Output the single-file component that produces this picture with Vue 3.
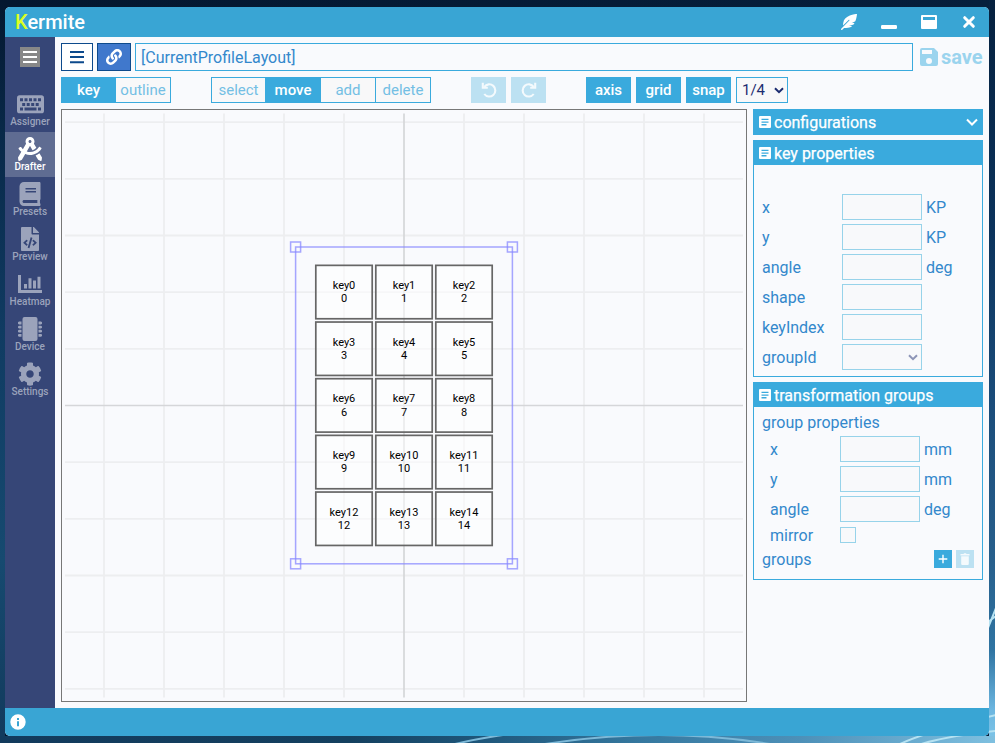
<script setup>
const icons = {
  drafter: 'M457.01 344.42c-25.05 20.33-52.63 37.18-82.54 49.05l54.38 94.19 53.95 23.04c9.81 4.19 20.89-2.21 22.17-12.8l7.02-58.25-54.98-95.23zm42.49-94.56c4.86-7.67 1.89-17.99-6.05-22.39l-28.07-15.57c-7.48-4.15-16.61-1.46-21.26 5.72C403.01 281.15 332.25 320 256 320c-23.93 0-47.23-4.25-69.41-11.53l67.36-116.68c.7.02 1.34.21 2.04.21s1.35-.19 2.04-.21l51.09 88.5c31.23-8.96 59.56-25.75 82.61-48.92l-51.79-89.71C347.39 128.03 352 112.63 352 96c0-53.02-42.98-96-96-96s-96 42.98-96 96c0 16.63 4.61 32.03 12.05 45.66l-68.3 118.31c-12.55-11.61-23.96-24.59-33.68-39-4.79-7.1-13.97-9.62-21.38-5.33l-27.75 16.07c-7.85 4.54-10.63 14.9-5.64 22.47 15.57 23.64 34.69 44.21 55.98 62.02L0 439.66l7.02 58.25c1.28 10.59 12.36 16.99 22.17 12.8l53.95-23.04 70.8-122.63C186.13 377.28 220.62 384 256 384c99.05 0 190-51.93 243.5-134.14zM256 64c17.67 0 32 14.33 32 32s-14.33 32-32 32-32-14.33-32-32 14.33-32 32-32z',
  book: 'M448 360V24c0-13.3-10.7-24-24-24H96C43 0 0 43 0 96v320c0 53 43 96 96 96h328c13.3 0 24-10.7 24-24v-16c0-7.5-3.5-14.3-8.9-18.7-4.2-15.4-4.2-59.3 0-74.7 5.4-4.3 8.9-11.1 8.9-18.6zM128 134c0-3.3 2.7-6 6-6h212c3.3 0 6 2.7 6 6v20c0 3.3-2.7 6-6 6H134c-3.3 0-6-2.7-6-6v-20zm0 64c0-3.3 2.7-6 6-6h212c3.3 0 6 2.7 6 6v20c0 3.3-2.7 6-6 6H134c-3.3 0-6-2.7-6-6v-20zm253.4 250H96c-17.7 0-32-14.3-32-32 0-17.6 14.4-32 32-32h285.4c-1.9 17.1-1.9 46.9 0 64z',
  code: 'M384 121.941V128H256V0h6.059c6.365 0 12.47 2.529 16.971 7.029l97.941 97.941A24.005 24.005 0 0 1 384 121.941zM248 160c-13.2 0-24-10.8-24-24V0H24C10.745 0 0 10.745 0 24v464c0 13.255 10.745 24 24 24h336c13.255 0 24-10.745 24-24V160H248zM123.206 400.505a5.4 5.4 0 0 1-7.633.246l-64.866-60.812a5.4 5.4 0 0 1 0-7.879l64.866-60.812a5.4 5.4 0 0 1 7.633.246l19.579 20.885a5.4 5.4 0 0 1-.372 7.747L101.65 336l40.763 35.874a5.4 5.4 0 0 1 .372 7.747l-19.579 20.884zm51.295 50.479l-27.453-7.97a5.402 5.402 0 0 1-3.681-6.692l61.44-211.626a5.402 5.402 0 0 1 6.692-3.681l27.452 7.97a5.4 5.4 0 0 1 3.68 6.692l-61.44 211.626a5.397 5.397 0 0 1-6.69 3.681zm160.792-111.045l-64.866 60.812a5.4 5.4 0 0 1-7.633-.246l-19.58-20.885a5.4 5.4 0 0 1 .372-7.747L284.35 336l-40.763-35.874a5.4 5.4 0 0 1-.372-7.747l19.58-20.885a5.4 5.4 0 0 1 7.633-.246l64.866 60.812a5.4 5.4 0 0 1-.001 7.879z',
  cog: 'M487.4 315.7l-42.6-24.6c4.3-23.2 4.3-47 0-70.2l42.6-24.6c4.9-2.8 7.1-8.6 5.5-14-11.1-35.6-30-67.8-54.7-94.6-3.8-4.1-10-5.1-14.8-2.3L380.8 110c-17.9-15.4-38.5-27.3-60.8-35.1V25.8c0-5.6-3.9-10.5-9.4-11.7-36.7-8.2-74.3-7.8-109.2 0-5.5 1.2-9.4 6.1-9.4 11.7V75c-22.2 7.9-42.8 19.8-60.8 35.1L88.7 85.5c-4.9-2.8-11-1.9-14.8 2.3-24.7 26.7-43.6 58.9-54.7 94.6-1.7 5.4.6 11.2 5.5 14L67.3 221c-4.3 23.2-4.3 47 0 70.2l-42.6 24.6c-4.9 2.8-7.1 8.6-5.5 14 11.1 35.6 30 67.8 54.7 94.6 3.8 4.1 10 5.1 14.8 2.3l42.6-24.6c17.9 15.4 38.5 27.3 60.8 35.1v49.2c0 5.6 3.9 10.5 9.4 11.7 36.7 8.2 74.3 7.8 109.2 0 5.5-1.2 9.4-6.1 9.4-11.7v-49.2c22.2-7.9 42.8-19.8 60.8-35.1l42.6 24.6c4.9 2.8 11 1.9 14.8-2.3 24.7-26.7 43.6-58.9 54.7-94.6 1.5-5.5-.7-11.3-5.6-14.1zM256 336c-44.1 0-80-35.9-80-80s35.9-80 80-80 80 35.9 80 80-35.9 80-80 80z',
  keyboard: 'M2.6 3.3h21.8a2.6 2.6 0 0 1 2.6 2.6v12.8a2.6 2.6 0 0 1-2.6 2.6H2.6A2.6 2.6 0 0 1 0 18.700V5.900a2.600 2.600 0 0 1 2.600-2.600zM3 6.200v3h3v-3zM7.500 6.200v3h3v-3zM12 6.200v3h3v-3zM16.500 6.200v3h3v-3zM21 6.200v3h3v-3zM5.200 10.900v3h3v-3zM9.700 10.900v3h3v-3zM14.200 10.900v3h3v-3zM18.700 10.900v3h3v-3zM3 15.600v2.800h3v-2.800zM7.500 15.600v2.800h12v-2.800zM21 15.600v2.800h3v-2.800z',
  heatmap: 'M0 3h3v15h21v3H0zM6 12h3v4.500H6zM10.500 6.300h3v10.200h-3zM15 8.500h3v8h-3zM19.500 4.800h3v11.700h-3z',
  device: 'M6.500 0h11a2 2 0 0 1 2 2v20a2 2 0 0 1-2 2h-11a2 2 0 0 1-2-2V2a2 2 0 0 1 2-2zM1 4.600h2.500v2.800H1l-1-.7v-1.400zM1 8.700h2.500v2.800H1l-1-.7V9.400zM1 12.800h2.500v2.800H1l-1-.7v-1.400zM1 16.900h2.500v2.800H1l-1-.7v-1.400zM23 4.600h-2.500v2.800H23l1-.7v-1.400zM23 8.700h-2.500v2.800H23l1-.7V9.400zM23 12.800h-2.500v2.800H23l1-.7v-1.400zM23 16.900h-2.500v2.800H23l1-.7v-1.400z'
}

const navItems = [
  { label: 'Assigner', path: icons.keyboard, box: '0 0 27 24', width: 27 },
  { label: 'Drafter', path: icons.drafter, box: '0 0 512 512', width: 24, active: true },
  { label: 'Presets', path: icons.book, box: '0 0 448 512', width: 24 },
  { label: 'Preview', path: icons.code, box: '0 0 384 512', width: 24 },
  { label: 'Heatmap', path: icons.heatmap, box: '0 0 24 24', width: 24 },
  { label: 'Device', path: icons.device, box: '0 0 24 24', width: 24 },
  { label: 'Settings', path: icons.cog, box: '0 0 512 512', width: 24 }
]

const editModes = ['select', 'move', 'add', 'delete']
const toggles = ['axis', 'grid', 'snap']

const keyFields = [
  { label: 'x', unit: 'KP' },
  { label: 'y', unit: 'KP' },
  { label: 'angle', unit: 'deg' },
  { label: 'shape', unit: '' },
  { label: 'keyIndex', unit: '' }
]
const groupFields = [
  { label: 'x', unit: 'mm' },
  { label: 'y', unit: 'mm' },
  { label: 'angle', unit: 'deg' }
]

const centerX = 342
const centerY = 295.5
const pitchX = 60
const pitchY = 56.67

const gridX = [-5, -4, -3, -2, -1, 1, 2, 3, 4, 5].map((i) => centerX + i * pitchX)
const gridY = [-5, -4, -3, -2, -1, 1, 2, 3, 4, 5].map((i) => centerY + i * pitchY)

const keys = Array.from({ length: 15 }, (_, i) => ({
  index: i,
  x: centerX + ((i % 3) - 1) * pitchX,
  y: centerY + (Math.floor(i / 3) - 2) * pitchY - 0.1
}))

const handles = [
  [233.6, 137],
  [450.4, 137],
  [233.6, 453.8],
  [450.4, 453.8]
]
</script>

<template>
  <div class="desktop">
    <svg class="streaks" viewBox="0 0 995 743">
      <path d="M455 744Q480 738 510 734M545 744Q660 726 770 744" />
      <path class="bright" d="M900 744Q925 732 996 715M915 746Q945 736 996 731M988 628L996 608M988 622L996 616" />
    </svg>
    <div class="window">
      <header class="titlebar">
        <h1 class="title"><span class="initial">K</span>ermite</h1>
        <div class="window-controls">
          <svg class="feather" viewBox="0 0 512 512"><path d="M512 0C460.22 3.56 96.44 38.2 71.01 287.61c-3.09 26.66-4.84 53.44-5.99 80.24l178.87-178.69c6.25-6.25 16.4-6.25 22.65 0s6.25 16.38 0 22.63L7.04 471.03c-9.38 9.37-9.38 24.57 0 33.94 9.38 9.37 24.6 9.37 33.98 0l57.13-57.07c42.09-.14 84.15-2.53 125.96-7.36 53.48-5.44 97.02-26.47 132.58-56.54H255.74l146.79-48.88c11.25-14.89 21.37-30.71 30.45-47.12h-81.14l106.54-53.21C500.29 132.86 510.19 26.26 512 0z" /></svg>
          <svg viewBox="0 0 16 16"><rect y="11" width="16" height="4" rx="1.3" /></svg>
          <svg viewBox="0 0 16 16"><path fill-rule="evenodd" d="M1 1h14a1 1 0 0 1 1 1v12a1 1 0 0 1-1 1H1a1 1 0 0 1-1-1V2a1 1 0 0 1 1-1zM2 3v3h12V3z" /></svg>
          <svg viewBox="0 0 16 16"><path class="cross" d="M3.700 3.700l8.600 8.600M12.300 3.700l-8.600 8.600" /></svg>
        </div>
      </header>

      <div class="body">
        <nav class="sidebar">
          <div class="menu-slot">
            <svg class="menu-box" viewBox="0 0 20 20"><path d="M3 5h14M3 10h14M3 15h14" /></svg>
          </div>
          <div v-for="item in navItems" :key="item.label" class="nav-item" :class="{ active: item.active }">
            <svg :viewBox="item.box" :width="item.width" height="24"><path fill-rule="evenodd" :d="item.path" /></svg>
            <span>{{ item.label }}</span>
          </div>
        </nav>

        <main class="main">
          <div class="file-row">
            <button class="list-button">
              <svg width="14" height="14" viewBox="0 0 14 14"><path d="M0 2h14M0 7.100h14M0 12.200h14" /></svg>
            </button>
            <button class="link-button">
              <svg width="16" height="16" viewBox="0 0 512 512"><path d="M326.612 185.391c59.747 59.809 58.927 155.698.36 214.59-.11.12-.24.25-.36.37l-67.2 67.2c-59.27 59.27-155.699 59.262-214.96 0-59.27-59.26-59.27-155.7 0-214.96l37.106-37.106c9.84-9.84 26.786-3.3 27.294 10.606.648 17.722 3.826 35.527 9.69 52.721 1.986 5.822.567 12.262-3.783 16.612l-13.087 13.087c-28.026 28.026-28.905 73.66-1.155 101.96 28.024 28.579 74.086 28.749 102.325.51l67.2-67.19c28.191-28.191 28.073-73.757 0-101.83-3.701-3.694-7.429-6.564-10.341-8.569a16.037 16.037 0 0 1-6.947-12.606c-.396-10.567 3.348-21.456 11.698-29.806l21.054-21.055c5.521-5.521 14.182-6.199 20.584-1.731a152.482 152.482 0 0 1 20.522 17.197zM467.547 44.449c-59.261-59.262-155.69-59.27-214.96 0l-67.2 67.2c-.12.12-.25.25-.36.37-58.566 58.892-59.387 154.781.36 214.59a152.454 152.454 0 0 0 20.521 17.196c6.402 4.468 15.064 3.789 20.584-1.731l21.054-21.055c8.35-8.35 12.094-19.239 11.698-29.806a16.037 16.037 0 0 0-6.947-12.606c-2.912-2.005-6.64-4.875-10.341-8.569-28.073-28.073-28.191-73.639 0-101.83l67.2-67.19c28.239-28.239 74.3-28.069 102.325.51 27.75 28.3 26.872 73.934-1.155 101.96l-13.087 13.087c-4.35 4.35-5.769 10.79-3.783 16.612 5.864 17.194 9.042 34.999 9.69 52.721.509 13.906 17.454 20.446 27.294 10.606l37.106-37.106c59.271-59.259 59.271-155.699.001-214.959z" /></svg>
            </button>
            <div class="file-name">[CurrentProfileLayout]</div>
            <div class="save">
              <svg width="18" height="18" viewBox="0 0 18 18"><path fill-rule="evenodd" d="M2 0h12l4 4v12a2 2 0 0 1-2 2H2a2 2 0 0 1-2-2V2a2 2 0 0 1 2-2zM2 2v4h10V2zM9 10a3 3 0 1 0 0 6a3 3 0 1 0 0-6z" /></svg>
              <span>save</span>
            </div>
          </div>

          <div class="tool-row">
            <div class="segments">
              <span class="segment selected">key</span>
              <span class="segment">outline</span>
            </div>
            <div class="segments">
              <span v-for="mode in editModes" :key="mode" class="segment" :class="{ selected: mode === 'move' }">{{ mode }}</span>
            </div>
            <div class="buttons">
              <span class="history"><svg width="16" height="16" viewBox="0 0 16 16"><path d="M3.300 4.800A6.100 6.100 0 1 1 3.300 12" /><path d="M1.800 .8v5h5" /></svg></span>
              <span class="history"><svg width="16" height="16" viewBox="0 0 16 16"><path d="M12.700 4.800A6.100 6.100 0 1 0 12.700 12" /><path d="M14.200 .8v5h-5" /></svg></span>
            </div>
            <div class="buttons">
              <span v-for="t in toggles" :key="t" class="toggle">{{ t }}</span>
              <span class="snap-select">1/4<svg width="10" height="7" viewBox="0 0 10 7"><path d="M1 1.200l4 4 4-4" /></svg></span>
            </div>
          </div>

          <div class="work-row">
            <section class="canvas">
              <svg width="684" height="591" viewBox="0 0 684 591">
                <g class="grid">
                  <line v-for="x in gridX" :key="'x' + x" :x1="x" y1="3.500" :x2="x" y2="587.500" />
                  <line v-for="y in gridY" :key="'y' + y" x1="3" :y1="y" x2="681" :y2="y" />
                </g>
                <g class="axis">
                  <line :x1="centerX" y1="3.500" :x2="centerX" y2="587.500" />
                  <line x1="3" :y1="centerY" x2="681" :y2="centerY" />
                </g>
                <g v-for="k in keys" :key="k.index" class="key">
                  <rect :x="k.x - 28.200" :y="k.y - 26.700" width="56.400" height="53.400" />
                  <text :x="k.x" :y="k.y - 3.200">key{{ k.index }}</text>
                  <text :x="k.x" :y="k.y + 10.150">{{ k.index }}</text>
                </g>
                <g class="selection">
                  <rect x="233.600" y="137" width="216.800" height="316.800" />
                  <rect v-for="(h, i) in handles" :key="i" :x="h[0] - 5" :y="h[1] - 5" width="10" height="10" />
                </g>
              </svg>
            </section>

            <aside class="panels">
              <section class="panel collapsed">
                <h2 class="panel-head">
                  <svg class="note" viewBox="0 0 12 12"><path fill-rule="evenodd" d="M1 0h10a1 1 0 0 1 1 1v10a1 1 0 0 1-1 1H1a1 1 0 0 1-1-1V1a1 1 0 0 1 1-1zM2.500 2.700v1.300h7V2.700zM2.500 5.400v1.300h7V5.400zM2.500 8.100v1.300h5V8.100z" /></svg>
                  configurations
                  <svg class="chevron" viewBox="0 0 12 8"><path d="M1 1.500l5 5 5-5" /></svg>
                </h2>
              </section>

              <section class="panel">
                <h2 class="panel-head">
                  <svg class="note" viewBox="0 0 12 12"><path fill-rule="evenodd" d="M1 0h10a1 1 0 0 1 1 1v10a1 1 0 0 1-1 1H1a1 1 0 0 1-1-1V1a1 1 0 0 1 1-1zM2.500 2.700v1.300h7V2.700zM2.500 5.400v1.300h7V5.400zM2.500 8.100v1.300h5V8.100z" /></svg>
                  key properties
                </h2>
                <div class="fields key-fields">
                  <div v-for="f in keyFields" :key="f.label" class="field">
                    <label>{{ f.label }}</label>
                    <span class="input"></span>
                    <span class="unit">{{ f.unit }}</span>
                  </div>
                  <div class="field">
                    <label>groupId</label>
                    <span class="input dropdown"><svg width="10" height="7" viewBox="0 0 10 7"><path d="M1 1.200l4 4 4-4" /></svg></span>
                  </div>
                </div>
              </section>

              <section class="panel">
                <h2 class="panel-head">
                  <svg class="note" viewBox="0 0 12 12"><path fill-rule="evenodd" d="M1 0h10a1 1 0 0 1 1 1v10a1 1 0 0 1-1 1H1a1 1 0 0 1-1-1V1a1 1 0 0 1 1-1zM2.500 2.700v1.300h7V2.700zM2.500 5.400v1.300h7V5.400zM2.500 8.100v1.300h5V8.100z" /></svg>
                  transformation groups
                </h2>
                <div class="group-body">
                  <div class="group-title">group properties</div>
                  <div class="fields group-fields">
                    <div v-for="f in groupFields" :key="f.label" class="field">
                      <label>{{ f.label }}</label>
                      <span class="input"></span>
                      <span class="unit">{{ f.unit }}</span>
                    </div>
                    <div class="field mirror">
                      <label>mirror</label>
                      <span class="checkbox"></span>
                    </div>
                  </div>
                  <div class="groups-row">
                    <span>groups</span>
                    <div class="group-actions">
                      <span class="action"><svg width="18" height="18" viewBox="0 0 18 18"><path class="plus" d="M9 4.700v8.600M4.700 9h8.600" /></svg></span>
                      <span class="action disabled"><svg width="18" height="18" viewBox="0 0 18 18"><path d="M4.500 4h3l.6-.8h1.800l.6.8h3v1.600h-9zM5.200 6.300h7.600V14a1 1 0 0 1-1 1H6.200a1 1 0 0 1-1-1z" /></svg></span>
                    </div>
                  </div>
                </div>
              </section>
            </aside>
          </div>
        </main>
      </div>

      <footer class="statusbar">
        <svg width="16" height="16" viewBox="0 0 16 16"><path fill-rule="evenodd" d="M8 .3a7.700 7.700 0 1 0 0 15.400A7.700 7.700 0 0 0 8 .3zM7 4v2h2V4zM7 7.200v5h2v-5z" /></svg>
      </footer>
    </div>
  </div>
</template>

<style>
body {
  margin: 0;
  overflow: hidden;
}
</style>

<style scoped>
* {
  box-sizing: border-box;
}
.desktop {
  position: relative;
  height: 743px;
  padding: 7px 6px 7px 5px;
  font-family: Roboto, "Liberation Sans", sans-serif;
  font-size: 16px;
  background:
    linear-gradient(90deg, #123a5c 0, #14405f 350px, #1e567a 480px, #35789f 640px, #4d90b8 800px, #7fc0e0 995px) 0 736px / 995px 7px no-repeat,
    linear-gradient(180deg, #06213f 0, #0b335c 230px, #1a4c7a 400px, #275f8c 560px, #2f74a2 650px, #6cb6e0 710px, #7fc6e8 743px) 989px 0 / 6px 743px no-repeat,
    linear-gradient(180deg, #04172f 0, #082848 130px, #103b62 330px, #164a70 560px, #123a5c 743px) 0 0 / 5px 743px no-repeat,
    linear-gradient(90deg, #04172f, #061f3c);
}
.streaks {
  position: absolute;
  inset: 0;
  fill: none;
  stroke: #7db9d8;
  stroke-width: 2;
}
.streaks .bright {
  stroke: #b5e2f2;
}
.window {
  position: relative;
  height: 729px;
  display: flex;
  flex-direction: column;
  border-radius: 5px;
  overflow: hidden;
  background: #f9fafd;
}
.titlebar {
  height: 30px;
  flex: none;
  display: flex;
  align-items: center;
  justify-content: space-between;
  padding: 0 12px 0 10px;
  background: #39a5d4;
  color: #fff;
}
.title {
  margin: 0;
  font-size: 20px;
  font-weight: 500;
  line-height: 30px;
}
.initial {
  color: #df2;
}
.window-controls {
  display: flex;
  gap: 24px;
}
.window-controls svg {
  width: 16px;
  height: 16px;
  fill: #fff;
}
.window-controls .cross {
  stroke: #fff;
  stroke-width: 3;
  stroke-linecap: round;
}
.body {
  flex: 1;
  display: flex;
  min-height: 0;
}
.sidebar {
  width: 50px;
  flex: none;
  background: #364677;
}
.menu-slot {
  height: 50px;
  padding: 10px 15px;
}
.menu-box {
  display: block;
  width: 20px;
  height: 20px;
  background: #888;
  stroke: #fff;
  stroke-width: 2;
}
.nav-item {
  height: 45px;
  padding-top: 5px;
  display: flex;
  flex-direction: column;
  align-items: center;
  color: #9ba3bb;
  fill: #9ba3bb;
  font-size: 10px;
  line-height: 12px;
  font-weight: 500;
}
.nav-item svg {
  display: block;
  flex: none;
}
.nav-item.active {
  background: #5f6c92;
  color: #fff;
  fill: #fff;
}
.main {
  flex: 1;
  padding: 6px;
  display: flex;
  flex-direction: column;
  gap: 6px;
}
.file-row {
  height: 28px;
  display: flex;
  gap: 4px;
}
.list-button,
.link-button {
  padding: 0;
  display: flex;
  align-items: center;
  justify-content: center;
  border: 1px solid #0d4a8c;
}
.list-button {
  width: 32px;
  background: #fff;
  stroke: #0d4a8c;
  stroke-width: 2;
}
.link-button {
  width: 34px;
  background: #4078cc;
  fill: #fff;
}
.file-name {
  width: 778px;
  border: 1px solid #3aaadd;
  padding-left: 5px;
  line-height: 27px;
  color: #38c;
}
.save {
  display: flex;
  align-items: center;
  gap: 3px;
  padding-left: 3px;
  font-size: 20px;
  font-weight: 700;
  color: #9bd4ee;
  fill: #9bd4ee;
}
.tool-row {
  height: 26px;
  display: flex;
  gap: 40px;
  font-size: 15px;
}
.segments {
  display: flex;
  border: 1px solid #3aaadd;
  background: #f8f8f9;
  color: #74bfe4;
}
.segment {
  width: 55px;
  text-align: center;
  line-height: 24px;
  border-right: 1px solid #3aaadd;
}
.segment:first-child {
  width: 54px;
}
.segment:last-child {
  width: 54px;
  border-right: none;
}
.segment.selected {
  background: #3aaadd;
  color: #fff;
  font-weight: 500;
}
.buttons {
  display: flex;
  gap: 5px;
}
.history {
  width: 35px;
  display: flex;
  align-items: center;
  justify-content: center;
  background: #bce1f2;
  fill: none;
  stroke: #f4fafd;
  stroke-width: 2.1;
}
.toggle {
  width: 45px;
  text-align: center;
  line-height: 26px;
  background: #3aaadd;
  color: #fff;
  font-weight: 500;
}
.snap-select {
  width: 52px;
  display: flex;
  align-items: center;
  justify-content: space-between;
  padding: 0 3px 0 5px;
  border: 1px solid #3aaadd;
  background: #f8f8f9;
  color: #1c2c70;
  stroke: #1c2c70;
}
.snap-select svg,
.dropdown svg {
  fill: none;
  stroke-width: 2;
}
.work-row {
  display: flex;
  gap: 6px;
}
.canvas {
  width: 686px;
  height: 593px;
  flex: none;
  border: 1px solid #777;
}
.canvas svg {
  display: block;
}
.grid line {
  stroke: #edeef0;
  stroke-width: 1.8;
}
.axis line {
  stroke: #d5d6d9;
  stroke-width: 1.7;
}
.key rect {
  fill: rgba(255, 255, 255, 0.5);
  stroke: #666;
  stroke-width: 1.7;
}
.key text {
  fill: #000;
  font-size: 11px;
  text-anchor: middle;
}
.selection rect {
  fill: none;
  stroke: #88f;
  stroke-opacity: 0.75;
  stroke-width: 1.5;
}
.panels {
  width: 230px;
  display: flex;
  flex-direction: column;
  gap: 5px;
  color: #38c;
}
.panel {
  border: 1px solid #3aaadd;
}
.panel-head {
  margin: 0;
  height: 24px;
  display: flex;
  align-items: center;
  gap: 3px;
  padding: 0 4px 0 5px;
  background: #3aaadd;
  color: #fff;
  font-size: 16px;
  font-weight: 400;
  -webkit-text-stroke: 0.25px #fff;
}
.note {
  width: 12px;
  height: 12px;
  fill: #fff;
}
.chevron {
  width: 12px;
  height: 8px;
  margin-left: auto;
  fill: none;
  stroke: #fff;
  stroke-width: 2;
}
.fields {
  display: flex;
  flex-direction: column;
  gap: 4px;
}
.key-fields {
  padding: 29px 8px 6px;
}
.field {
  height: 26px;
  display: flex;
  align-items: center;
}
.field label {
  width: 80px;
}
.input {
  width: 80px;
  height: 26px;
  border: 1px solid #97d3ea;
  background: #f8f9fb;
}
.unit {
  margin-left: 4px;
}
.dropdown {
  display: flex;
  align-items: center;
  justify-content: flex-end;
  padding-right: 3px;
  stroke: #8d95b7;
}
.group-body {
  padding: 4px 8px 10px;
}
.group-title {
  height: 25px;
  line-height: 24px;
}
.group-fields {
  padding-left: 8px;
}
.group-fields label {
  width: 70px;
}
.field.mirror {
  height: 18px;
}
.checkbox {
  width: 16px;
  height: 16px;
  border: 1px solid #97d3ea;
  background: #f8f9fb;
}
.groups-row {
  height: 20px;
  margin-top: 5px;
  display: flex;
  align-items: center;
  justify-content: space-between;
}
.group-actions {
  display: flex;
  gap: 4px;
}
.action {
  width: 18px;
  height: 18px;
  background: #3aaadd;
  fill: #f4fafd;
}
.action svg {
  display: block;
}
.plus {
  stroke: #fff;
  stroke-width: 1.4;
}
.action.disabled {
  background: #bce1f2;
}
.statusbar {
  height: 28px;
  flex: none;
  display: flex;
  align-items: center;
  padding-left: 5px;
  background: #39a5d4;
  fill: #fff;
}
</style>
